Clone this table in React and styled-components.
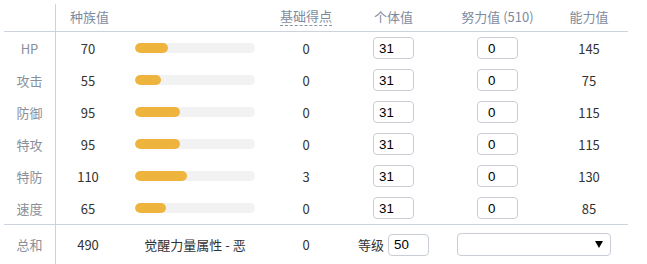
import React from "react";
import styled, { createGlobalStyle } from "styled-components";

const Global = createGlobalStyle`
  html, body { margin: 0; padding: 0; background: #fff; }
  body { font-family: "Noto Sans CJK SC", "Noto Sans", sans-serif; font-size: 13px; color: #333; }
`;

const COLS = "52px 64px 150px 72px 103px 105px 78px";

const Table = styled.div`
  margin-left: 4px;
  width: 624px;
`;

const Row = styled.div`
  display: grid;
  grid-template-columns: ${COLS};
  height: ${(p) => p.$h || 32}px;
  align-items: center;
  border-bottom: ${(p) => (p.$line ? "1px solid #ccd3de" : "none")};
`;

const Cell = styled.div`
  height: 100%;
  display: flex;
  align-items: center;
  justify-content: center;
  grid-column: ${(p) => p.$span || "auto"};
  color: #333;
`;

const SelectCell = styled(Cell)`
  justify-content: flex-start;
  padding-left: 10px;
`;

const LabelCell = styled(Cell)`
  border-right: 1px solid #ccd3de;
  color: #8a8f99;
  height: ${(p) => (p.$head ? "calc(100% - 4px)" : "100%")};
  align-self: end;
`;

const Head = styled(Cell)`
  color: #7d8ba0;
  padding-top: 2px;
  justify-content: ${(p) => (p.$left ? "flex-start" : "center")};
  padding-left: ${(p) => (p.$left ? "14px" : "0")};
`;

const Dashed = styled.span`
  border-bottom: 1px dashed #8a93a3;
  line-height: 16px;
  padding-bottom: 1px;
`;

const BarTrack = styled.div`
  width: 120px;
  height: 10px;
  border-radius: 5px;
  background: #f2f2f2;
  margin-left: 15px;
  overflow: hidden;
`;

const BarFill = styled.div`
  height: 100%;
  border-radius: 5px;
  background: #efb43d;
`;

const BarCell = styled(Cell)`
  justify-content: flex-start;
`;

const Input = styled.input`
  box-sizing: border-box;
  width: 41px;
  height: 22px;
  border: 1px solid #c9ced6;
  border-radius: 4px;
  font-family: "Liberation Sans", Arial, sans-serif;
  font-size: 13.3px;
  color: #000;
  padding: 0 0 0 ${(p) => p.$pad || 5}px;
  outline: none;
  background: #fff;
`;

const LevelWrap = styled.div`
  display: flex;
  align-items: center;
  gap: 4px;
  color: #333;
`;

const Select = styled.div`
  box-sizing: border-box;
  width: 154px;
  height: 23px;
  border: 1px solid #c9ced6;
  border-radius: 4px;
  display: flex;
  align-items: center;
  justify-content: flex-end;
  padding-right: 7px;
  margin-left: 2px;
`;

const stats = [
  ["HP", 70, 0, 145],
  ["攻击", 55, 0, 75],
  ["防御", 95, 0, 115],
  ["特攻", 95, 0, 115],
  ["特防", 110, 3, 130],
  ["速度", 65, 0, 85],
];

export default function App() {
  return (
    <>
      <Global />
      <Table>
        <Row $h={31} $line>
          <LabelCell $head />
          <Head $left $span="2 / 4">种族值</Head>
          <Head><Dashed>基础得点</Dashed></Head>
          <Head>个体值</Head>
          <Head>努力值 (510)</Head>
          <Head>能力值</Head>
        </Row>
        {stats.map(([name, base, pt, val], i) => (
          <Row key={name} $h={32} $line={i === stats.length - 1}>
            <LabelCell>{name}</LabelCell>
            <Cell>{base}</Cell>
            <BarCell>
              <BarTrack>
                <BarFill style={{ width: `${(base / 255) * 120}px` }} />
              </BarTrack>
            </BarCell>
            <Cell>{pt}</Cell>
            <Cell><Input defaultValue="31" /></Cell>
            <Cell><Input defaultValue="0" $pad={10} /></Cell>
            <Cell>{val}</Cell>
          </Row>
        ))}
        <Row $h={39}>
          <LabelCell>总和</LabelCell>
          <Cell>490</Cell>
          <Cell>觉醒力量属性 - 恶</Cell>
          <Cell>0</Cell>
          <Cell>
            <LevelWrap>等级<Input defaultValue="50" $pad={5} /></LevelWrap>
          </Cell>
          <SelectCell $span="6 / 8">
            <Select>
              <svg width="8" height="7" viewBox="0 0 8 7">
                <path d="M0 0H8L4 7Z" fill="#000" />
              </svg>
            </Select>
          </SelectCell>
        </Row>
      </Table>
    </>
  );
}
